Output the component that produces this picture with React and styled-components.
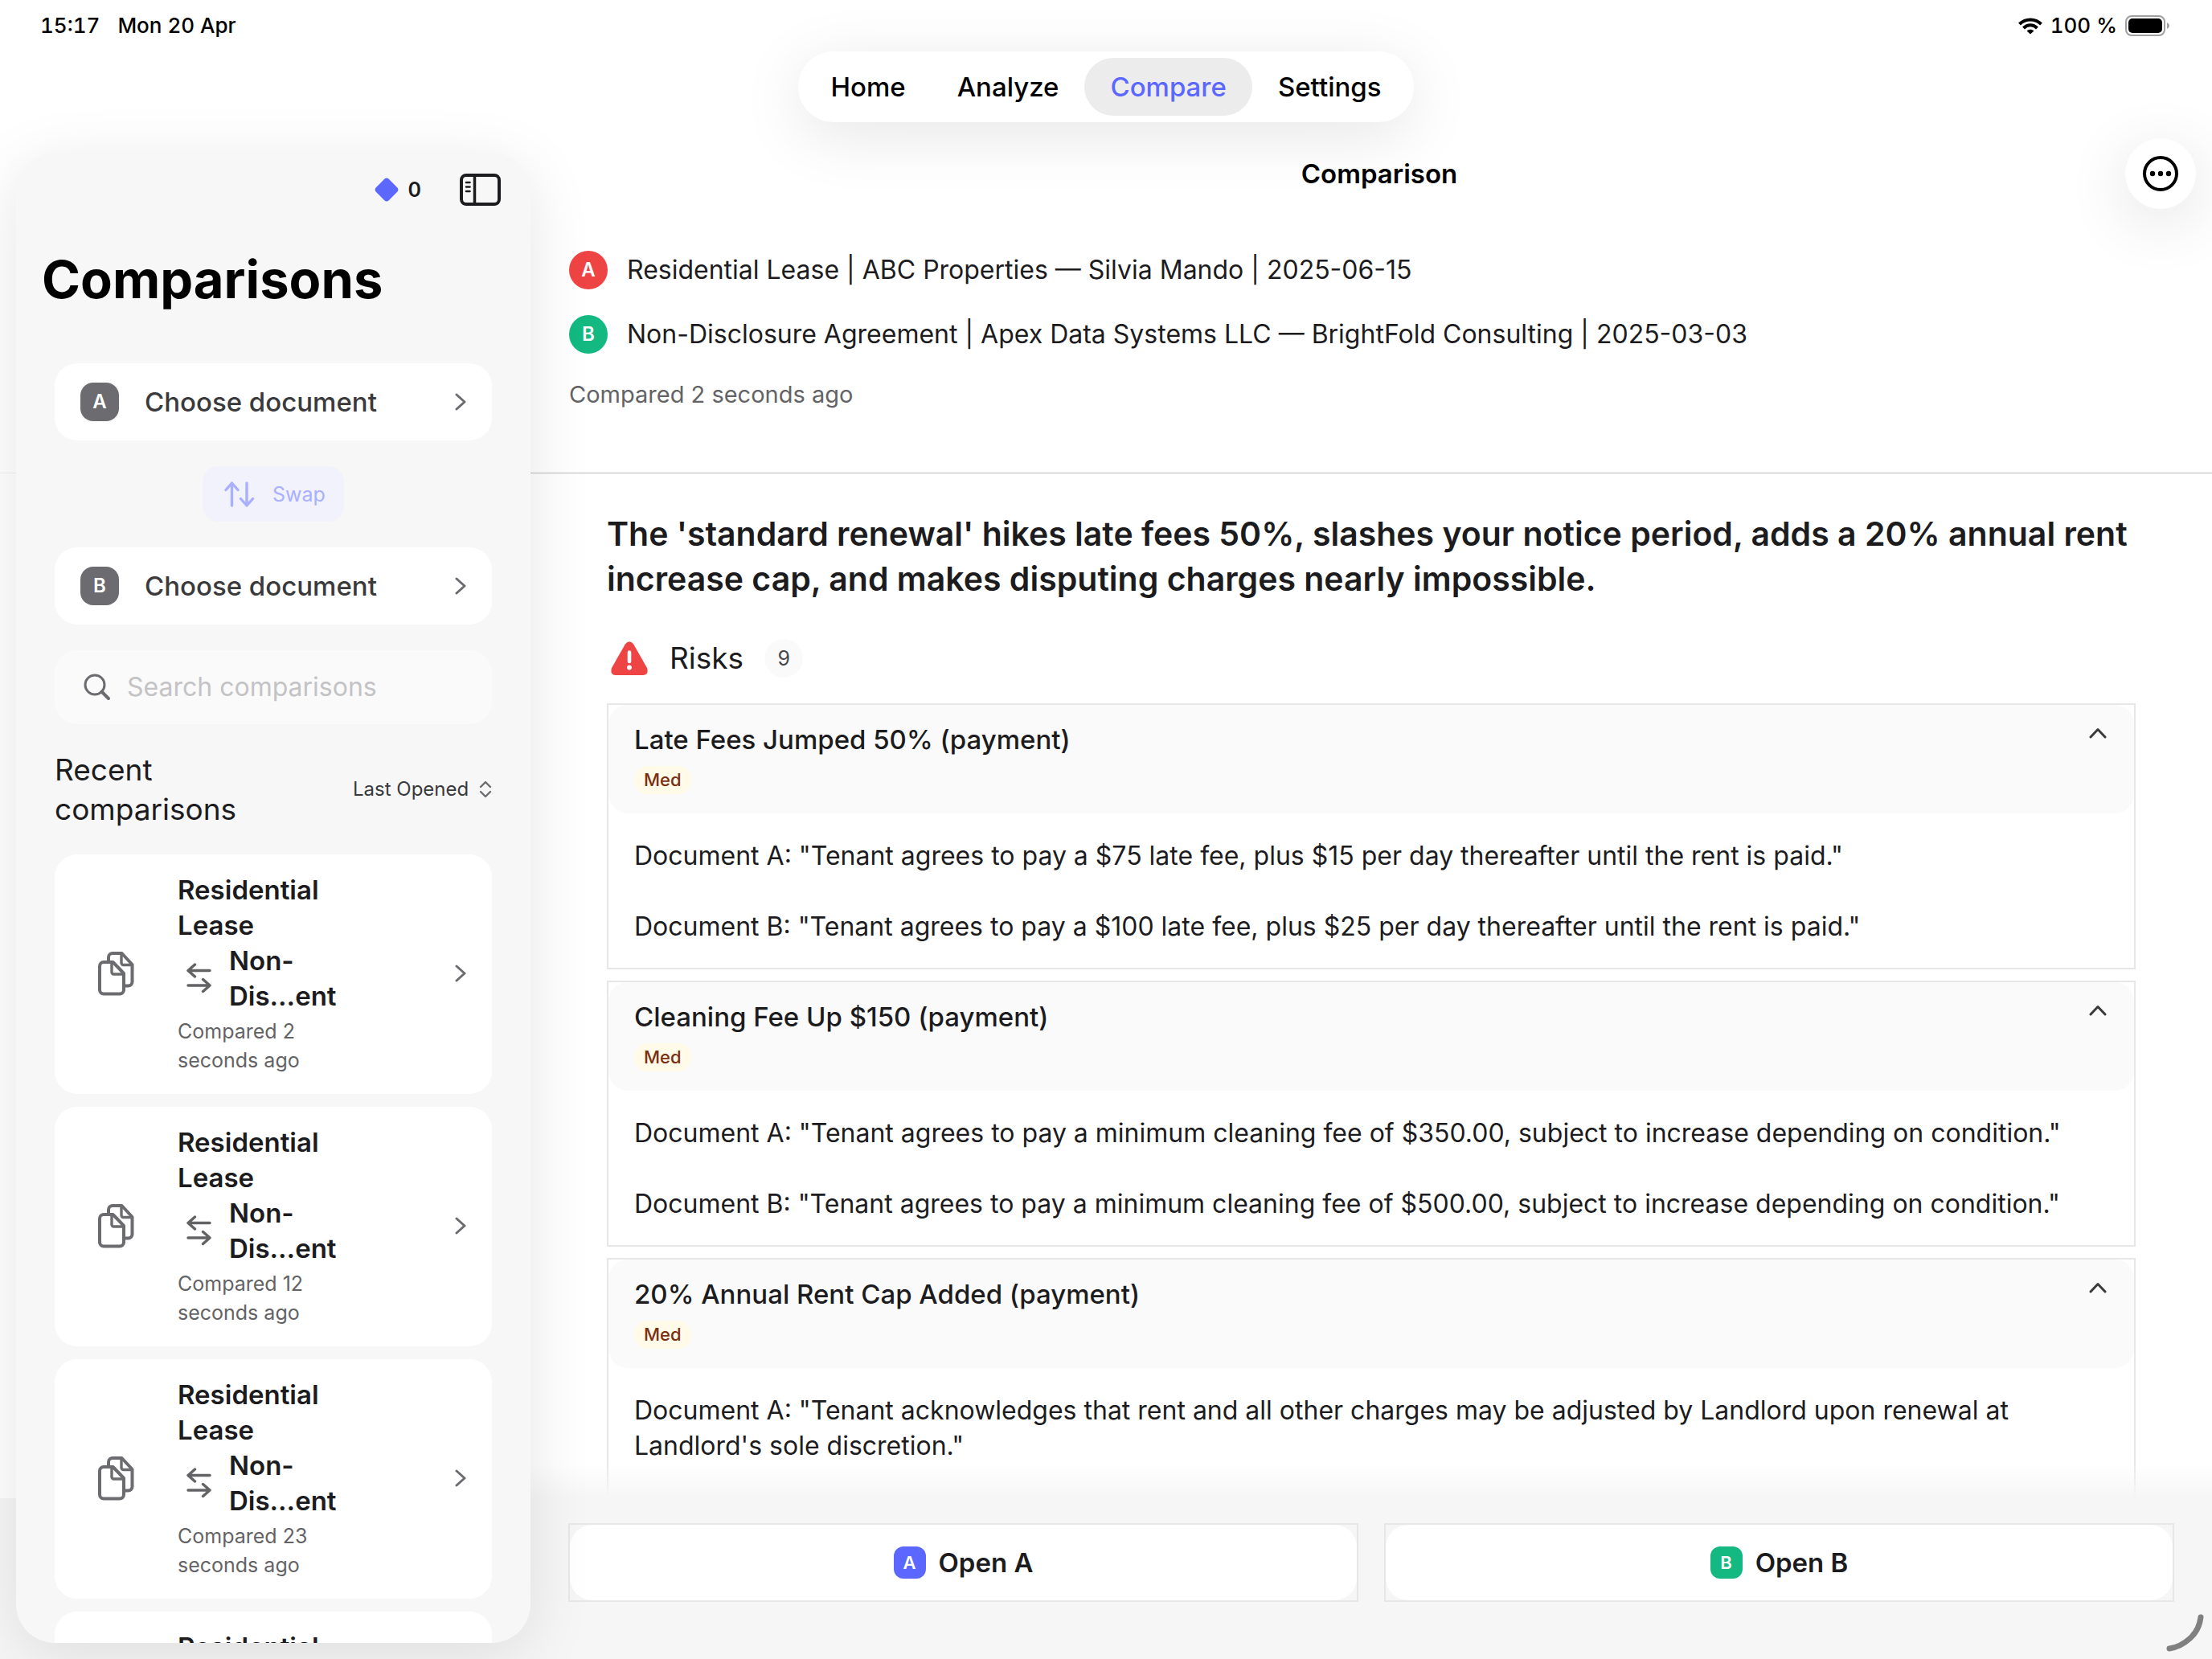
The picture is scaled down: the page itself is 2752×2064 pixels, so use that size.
import React from 'react';
import styled, { createGlobalStyle, css } from 'styled-components';

const color = {
  ink: '#1c1c1f',
  inkSoft: '#3a3a3c',
  muted: '#636366',
  icon: '#6c6c70',
  accent: '#5b67ff',
  red: '#ef4444',
  green: '#13b981',
  panel: '#f7f7f7',
  faint: '#fafafa',
  line: '#e7e7e7',
};

const size = {
  xs: '22px',
  sm: '24px',
  md: '25px',
  status: '26px',
  lg: '29px',
  body: '32px',
  label: '33px',
  title: '37px',
  lead: '41px',
  hero: '65px',
};

const GlobalStyle = createGlobalStyle`
  *, *::before, *::after { box-sizing: border-box; }
  body {
    margin: 0;
    background: #fff;
    color: ${color.ink};
    font-family: Inter, "Liberation Sans", sans-serif;
    font-size: ${size.body};
    line-height: 44px;
  }
  h1, h2, h3, p, ul { margin: 0; padding: 0; font-weight: 400; }
  ul { list-style: none; }
  button, input, select { font: inherit; color: inherit; }
  button { cursor: pointer; border: 0; background: none; padding: 0; text-align: left; }
  a { color: inherit; text-decoration: none; }
  svg { display: block; flex: none; }
`;

const Screen = styled.div`
  display: grid;
  grid-template-columns: 660px minmax(0, 1fr);
  grid-template-rows: 64px 88px minmax(0, 1fr);
  height: 100vh;
  overflow: hidden;
`;

const StatusBar = styled.header`
  grid-column: 1 / -1;
  display: flex;
  justify-content: space-between;
  align-items: center;
  padding: 0 52px 0 50px;
  color: #000;
  font-size: ${size.status};
  font-weight: 500;
  font-variant-numeric: tabular-nums;
  line-height: 32px;
`;

const StatusGroup = styled.div`
  display: flex;
  align-items: center;
  gap: ${(p) => p.$gap}px;
`;

const NavRow = styled.div`
  grid-column: 1 / -1;
  display: flex;
  justify-content: center;
  z-index: 3;
`;

const NavPill = styled.nav`
  display: flex;
  padding: 8px;
  border-radius: 44px;
  background: #fff;
  box-shadow: 0 16px 80px rgba(0, 0, 0, 0.1);
`;

const NavLink = styled.a`
  display: flex;
  align-items: center;
  padding: 0 32px;
  border-radius: 36px;
  color: #000;
  font-size: ${size.label};
  font-weight: 500;
  ${(p) => p.$active && css`
    background: #ececec;
    color: ${color.accent};
  `}
`;

const Sidebar = styled.aside`
  grid-area: 3 / 1;
  z-index: 2;
  display: flex;
  flex-direction: column;
  margin: 38px 0 20px 20px;
  border-radius: 48px;
  background: ${color.panel};
  overflow: hidden;
  box-shadow: 0 16px 80px rgba(0, 0, 0, 0.1);
`;

const SidebarTools = styled.div`
  flex: none;
  display: flex;
  align-items: center;
  justify-content: flex-end;
  gap: 48px;
  height: 92px;
  padding-right: 37px;
`;

const Credits = styled.div`
  display: flex;
  align-items: center;
  gap: 12px;
  font-size: ${size.md};
  font-weight: 600;
`;

const SidebarTitle = styled.h1`
  flex: none;
  padding: 26px 32px 0;
  color: #000;
  font-size: ${size.hero};
  font-weight: 700;
  line-height: 80px;
`;

const SidebarBody = styled.div`
  display: flex;
  flex-direction: column;
  gap: 32px;
  padding: 64px 48px 0;
`;

const Chooser = styled.button`
  display: flex;
  align-items: center;
  height: 96px;
  padding: 0 32px;
  gap: 32px;
  border-radius: 28px;
  background: #fff;
  color: ${color.inkSoft};
  font-size: ${size.label};
  font-weight: 500;
`;

const Grow = styled.span`
  flex: 1;
`;

const Letter = styled.span`
  display: flex;
  align-items: center;
  justify-content: center;
  flex: none;
  width: ${(p) => p.$size}px;
  height: ${(p) => p.$size}px;
  border-radius: ${(p) => p.$radius}px;
  background: ${(p) => p.$bg};
  color: #fff;
  font-size: ${(p) => (p.$size > 40 ? size.sm : size.xs)};
  font-weight: 600;
`;

const SwapButton = styled.button`
  display: flex;
  align-items: center;
  align-self: center;
  gap: 22px;
  height: 69px;
  padding: 0 23px 0 27px;
  border-radius: 20px;
  background: #f1f2fb;
  color: #a9b0ff;
  font-size: ${size.md};
`;

const SearchField = styled.label`
  display: flex;
  align-items: center;
  gap: 20px;
  height: 92px;
  padding: 0 36px;
  border-radius: 28px;
  background: ${color.faint};
  color: ${color.icon};
`;

const SearchInput = styled.input`
  flex: 1;
  min-width: 0;
  padding: 0;
  border: 0;
  outline: 0;
  background: none;
  &::placeholder { color: #c3c3c5; opacity: 1; }
`;

const RecentHeader = styled.div`
  display: flex;
  align-items: center;
  justify-content: space-between;
`;

const RecentTitle = styled.h2`
  max-width: 280px;
  font-size: ${size.title};
  line-height: 49px;
`;

const SortField = styled.label`
  display: flex;
  align-items: center;
  gap: 12px;
  color: ${color.inkSoft};
  font-size: ${size.sm};
  line-height: 32px;
`;

const SortSelect = styled.select`
  appearance: none;
  padding: 0;
  border: 0;
  background: none;
`;

const RecentList = styled.ul`
  display: flex;
  flex-direction: column;
  gap: 16px;
`;

const RecentCard = styled.button`
  display: flex;
  align-items: center;
  width: 100%;
  padding: 22px 32px 24px 54px;
  border-radius: 28px;
  background: #fff;
  color: ${color.icon};
`;

const RecentText = styled.span`
  display: block;
  width: 216px;
  margin: 0 auto 0 54px;
  color: ${color.ink};
  font-size: ${size.label};
  font-weight: 600;
`;

const RecentPair = styled.span`
  display: flex;
  align-items: center;
  gap: 22px;
  padding-left: 11px;
  color: ${color.muted};
`;

const PairName = styled.span`
  color: ${color.ink};
`;

const RecentTime = styled.span`
  display: block;
  padding-top: 4px;
  color: ${color.muted};
  font-size: ${size.md};
  font-weight: 400;
  line-height: 36px;
`;

/* Runs under the floating sidebar so that rules and bars reach both window edges. */
const Detail = styled.main`
  grid-area: 3 / 1 / 4 / 3;
  display: flex;
  flex-direction: column;
  min-height: 0;
`;

const TitleRow = styled.div`
  display: grid;
  grid-template-columns: 1fr auto 1fr;
  align-items: center;
  padding: 20px 20px 0 700px;
`;

const DetailTitle = styled.h2`
  grid-column: 2;
  color: #000;
  font-size: ${size.label};
  font-weight: 600;
`;

const MoreButton = styled.button`
  display: grid;
  place-items: center;
  justify-self: end;
  width: 88px;
  height: 88px;
  border-radius: 50%;
  background: #fff;
  color: #000;
  box-shadow: 0 16px 80px rgba(0, 0, 0, 0.12);
`;

const Documents = styled.section`
  display: flex;
  flex-direction: column;
  gap: 32px;
  padding: 52px 48px 78px 708px;
  border-bottom: 1px solid;
  border-image: linear-gradient(to right, #f0f0f0 340px, #b9b9b9 340px) 1;
`;

const DocumentLine = styled.p`
  display: flex;
  align-items: center;
  gap: 24px;
  height: 48px;
`;

const ComparedAt = styled.p`
  color: ${color.muted};
  font-size: ${size.lg};
  line-height: 38px;
`;

const Report = styled.section`
  flex: 1;
  min-height: 0;
  overflow: hidden;
  padding: 47px 95px 0 755px;
`;

const Summary = styled.h3`
  font-size: ${size.lead};
  font-weight: 600;
  line-height: 56px;
`;

const RiskHeading = styled.div`
  display: flex;
  align-items: center;
  gap: 26px;
  height: 48px;
  margin: 47px 0 32px;
  padding-left: 4px;
`;

const RiskTitle = styled.h3`
  font-size: ${size.title};
  line-height: 48px;
`;

const Count = styled.span`
  display: grid;
  place-items: center;
  width: 48px;
  height: 48px;
  border-radius: 50%;
  background: ${color.faint};
  color: #48484a;
  font-size: ${size.md};
`;

const RiskList = styled.div`
  display: flex;
  flex-direction: column;
  gap: 14px;
`;

const RiskCard = styled.article`
  border: 2px solid ${color.line};
  &:last-child { padding-bottom: 88px; }
`;

const RiskToggle = styled.button`
  display: flex;
  justify-content: space-between;
  width: 100%;
  padding: 21px 34px 24px 32px;
  border-radius: 24px;
  background: ${color.faint};
  font-size: ${size.label};
  font-weight: 500;
`;

const RiskLabel = styled.span`
  display: flex;
  flex-direction: column;
  align-items: flex-start;
  gap: 11px;
`;

const Severity = styled.span`
  padding: 0 12px;
  border-radius: 16px;
  background: #fffbe8;
  color: #7a2e12;
  font-size: ${size.xs};
  line-height: 35px;
`;

const ChevronSlot = styled.span`
  padding-top: 7px;
  color: ${color.inkSoft};
`;

const RiskBody = styled.div`
  display: flex;
  flex-direction: column;
  gap: 44px;
  padding: 31px 32px 29px;
`;

const BottomBar = styled.footer`
  position: relative;
  display: grid;
  grid-template-columns: 1fr 1fr;
  gap: 32px;
  padding: 31px 47px 71px 707px;
  background: #f6f6f6;
  &::before {
    content: '';
    position: absolute;
    inset: -44px 0 auto 660px;
    height: 44px;
    background: linear-gradient(rgba(246, 246, 246, 0), #f6f6f6);
  }
`;

const OpenFrame = styled.div`
  border: 2px solid ${color.line};
`;

const OpenButton = styled.button`
  display: flex;
  align-items: center;
  justify-content: center;
  gap: 16px;
  width: 100%;
  height: 94px;
  border-radius: 28px;
  background: #fff;
  font-size: ${size.label};
  font-weight: 600;
`;

const CornerMark = styled.svg`
  position: absolute;
  right: 8px;
  bottom: 8px;
`;

const line = { fill: 'none', stroke: 'currentColor', strokeLinecap: 'round', strokeLinejoin: 'round' };

const WifiIcon = () => (
  <svg width="30" height="21" viewBox="0 0 30 21" fill="none" stroke="currentColor" strokeWidth="4">
    <path d="M1.500 8 C9 0.500 21 0.500 28.500 8" />
    <path d="M6.500 13 C11.500 8 18.500 8 23.500 13" />
    <path d="M10.500 16.500 C13 14 17 14 19.500 16.500 L15 20.500Z" fill="currentColor" stroke="none" />
  </svg>
);

const BatteryIcon = () => (
  <svg width="56" height="26" viewBox="0 0 56 26">
    <rect x="1" y="1" width="48" height="24" rx="7" fill="none" stroke="#a0a0a0" strokeWidth="2" />
    <rect x="4" y="4" width="42" height="18" rx="5" />
    <path d="M52 9 q3 1.500 3 4 q0 2.500 -3 4z" fill="#a0a0a0" />
  </svg>
);

const DiamondIcon = () => (
  <svg width="30" height="30" viewBox="0 0 30 30" fill={color.accent}>
    <path d="M12.500 1.600 Q15 -0.400 17.500 1.600 L28.400 12.500 Q30.400 15 28.400 17.500 L17.500 28.400 Q15 30.400 12.500 28.400 L1.600 17.500 Q-0.400 15 1.600 12.500Z" />
  </svg>
);

const SidebarIcon = () => (
  <svg width="51" height="40" viewBox="0 0 51 40" {...line} strokeWidth="4">
    <rect x="2" y="2" width="47" height="36" rx="6" />
    <path d="M18.500 2V38" strokeWidth="3.500" />
    <path d="M8 11H12.500M8 16.500H12.500M8 22H12.500" strokeWidth="2.600" />
  </svg>
);

const ChevronRight = () => (
  <svg width="14" height="22" viewBox="0 0 14 22" {...line} stroke={color.icon} strokeWidth="3">
    <path d="M2 2L12 11L2 20" />
  </svg>
);

const ChevronUp = () => (
  <svg width="22" height="14" viewBox="0 0 22 14" {...line} strokeWidth="3">
    <path d="M2 12L11 2.500L20 12" />
  </svg>
);

const SwapIcon = () => (
  <svg width="38" height="32" viewBox="0 0 38 32" {...line} strokeWidth="3.400">
    <path d="M9.500 30V2M2 10.500L9.500 2L17 10.500M28 2V30M20.500 21.500L28 30L35.500 21.500" />
  </svg>
);

const SearchIcon = () => (
  <svg width="34" height="34" viewBox="0 0 34 34" {...line} strokeWidth="3">
    <circle cx="14" cy="14" r="12" />
    <path d="M22.500 22.500L31 31" strokeWidth="4" />
  </svg>
);

const SortIcon = () => (
  <svg width="16" height="22" viewBox="0 0 16 22" {...line} stroke={color.icon} strokeWidth="2.400">
    <path d="M2 8L8 2L14 8M2 14L8 20L14 14" />
  </svg>
);

const DocumentsIcon = () => (
  <svg width="45" height="55" viewBox="0 0 45 55" {...line} strokeWidth="4">
    <path d="M13 11V7a5 5 0 0 1 5-5H29.500L42.500 16V37.500a5 5 0 0 1-5 5H34" />
    <path d="M29 2V14a2.500 2.500 0 0 0 2.500 2.500H42.500" strokeWidth="3.400" />
    <path d="M18.500 13H7a5 5 0 0 0-5 5V47.500a5 5 0 0 0 5 5H27a5 5 0 0 0 5-5V27Z" />
    <path d="M17 13V25.500a2.500 2.500 0 0 0 2.500 2.500H32" strokeWidth="3.400" />
  </svg>
);

const ExchangeIcon = () => (
  <svg width="31" height="38" viewBox="0 0 31 38" {...line} strokeWidth="3.400">
    <path d="M29 9.500H2M10.500 2L2 9.500L10.500 17M2 28H29M20.500 20.500L29 28L20.500 35.500" />
  </svg>
);

const MoreIcon = () => (
  <svg width="44" height="44" viewBox="0 0 44 44">
    <circle cx="22" cy="22" r="20" fill="none" stroke="currentColor" strokeWidth="4" />
    <circle cx="12" cy="22" r="3.200" />
    <circle cx="22" cy="22" r="3.200" />
    <circle cx="32" cy="22" r="3.200" />
  </svg>
);

const WarningIcon = () => (
  <svg width="48" height="42" viewBox="0 0 48 42">
    <path d="M18.800 3.600 Q24 -3.200 29.200 3.600 L46 33 Q48.500 41.500 41 42 H7 Q-0.500 41.500 2 33Z" fill={color.red} />
    <path d="M24 13.500V25" stroke="#fff" strokeWidth="4.600" strokeLinecap="round" />
    <circle cx="24" cy="32.500" r="2.900" fill="#fff" />
  </svg>
);

const comparisons = ['Compared 2 seconds ago', 'Compared 12 seconds ago', 'Compared 23 seconds ago', 'Compared 35 seconds ago'];

const risks = [
  {
    title: 'Late Fees Jumped 50% (payment)',
    a: 'Document A: "Tenant agrees to pay a $75 late fee, plus $15 per day thereafter until the rent is paid."',
    b: 'Document B: "Tenant agrees to pay a $100 late fee, plus $25 per day thereafter until the rent is paid."',
  },
  {
    title: 'Cleaning Fee Up $150 (payment)',
    a: 'Document A: "Tenant agrees to pay a minimum cleaning fee of $350.00, subject to increase depending on condition."',
    b: 'Document B: "Tenant agrees to pay a minimum cleaning fee of $500.00, subject to increase depending on condition."',
  },
  {
    title: '20% Annual Rent Cap Added (payment)',
    a: 'Document A: "Tenant acknowledges that rent and all other charges may be adjusted by Landlord upon renewal at Landlord\'s sole discretion."',
  },
];

const DocumentChooser = ({ letter }) => (
  <Chooser type="button">
    <Letter $size={48} $radius={16} $bg={color.icon}>{letter}</Letter>
    <Grow>Choose document</Grow>
    <ChevronRight />
  </Chooser>
);

const Recent = ({ time }) => (
  <li>
    <RecentCard type="button">
      <DocumentsIcon />
      <RecentText>
        Residential Lease
        <RecentPair>
          <ExchangeIcon />
          <PairName>Non-Dis…ent</PairName>
        </RecentPair>
        <RecentTime>{time}</RecentTime>
      </RecentText>
      <ChevronRight />
    </RecentCard>
  </li>
);

const Risk = ({ title, a, b }) => (
  <RiskCard>
    <RiskToggle type="button" aria-expanded="true">
      <RiskLabel>
        {title}
        <Severity>Med</Severity>
      </RiskLabel>
      <ChevronSlot><ChevronUp /></ChevronSlot>
    </RiskToggle>
    <RiskBody>
      <p>{a}</p>
      {b && <p>{b}</p>}
    </RiskBody>
  </RiskCard>
);

export default function App() {
  return (
    <Screen>
      <GlobalStyle />
      <StatusBar>
        <StatusGroup $gap={22}>
          <span>15:17</span>
          <span>Mon 20 Apr</span>
        </StatusGroup>
        <StatusGroup $gap={10}>
          <WifiIcon />
          <span>100 %</span>
          <BatteryIcon />
        </StatusGroup>
      </StatusBar>

      <NavRow>
        <NavPill>
          <NavLink href="#home">Home</NavLink>
          <NavLink href="#analyze">Analyze</NavLink>
          <NavLink href="#compare" $active aria-current="page">Compare</NavLink>
          <NavLink href="#settings">Settings</NavLink>
        </NavPill>
      </NavRow>

      <Sidebar>
        <SidebarTools>
          <Credits><DiamondIcon />0</Credits>
          <button type="button" aria-label="Toggle sidebar"><SidebarIcon /></button>
        </SidebarTools>
        <SidebarTitle>Comparisons</SidebarTitle>
        <SidebarBody>
          <DocumentChooser letter="A" />
          <SwapButton type="button"><SwapIcon />Swap</SwapButton>
          <DocumentChooser letter="B" />
          <SearchField>
            <SearchIcon />
            <SearchInput type="search" placeholder="Search comparisons" aria-label="Search comparisons" />
          </SearchField>
          <RecentHeader>
            <RecentTitle>Recent comparisons</RecentTitle>
            <SortField>
              <SortSelect aria-label="Sort order" defaultValue="opened">
                <option value="opened">Last Opened</option>
              </SortSelect>
              <SortIcon />
            </SortField>
          </RecentHeader>
          <RecentList>
            {comparisons.map((time) => <Recent key={time} time={time} />)}
          </RecentList>
        </SidebarBody>
      </Sidebar>

      <Detail>
        <TitleRow>
          <DetailTitle>Comparison</DetailTitle>
          <MoreButton type="button" aria-label="More"><MoreIcon /></MoreButton>
        </TitleRow>
        <Documents>
          <DocumentLine>
            <Letter $size={48} $radius={24} $bg={color.red}>A</Letter>
            Residential Lease | ABC Properties — Silvia Mando | 2025-06-15
          </DocumentLine>
          <DocumentLine>
            <Letter $size={48} $radius={24} $bg={color.green}>B</Letter>
            Non-Disclosure Agreement | Apex Data Systems LLC — BrightFold Consulting | 2025-03-03
          </DocumentLine>
          <ComparedAt>Compared 2 seconds ago</ComparedAt>
        </Documents>
        <Report>
          <Summary>
            The 'standard renewal' hikes late fees 50%, slashes your notice period, adds a 20% annual rent
            increase cap, and makes disputing charges nearly impossible.
          </Summary>
          <RiskHeading>
            <WarningIcon />
            <RiskTitle>Risks</RiskTitle>
            <Count>9</Count>
          </RiskHeading>
          <RiskList>
            {risks.map((risk) => <Risk key={risk.title} {...risk} />)}
          </RiskList>
        </Report>
        <BottomBar>
          <OpenFrame>
            <OpenButton type="button">
              <Letter $size={40} $radius={12} $bg={color.accent}>A</Letter>Open A
            </OpenButton>
          </OpenFrame>
          <OpenFrame>
            <OpenButton type="button">
              <Letter $size={40} $radius={12} $bg={color.green}>B</Letter>Open B
            </OpenButton>
          </OpenFrame>
          <CornerMark width="50" height="50" viewBox="0 0 50 50" {...line} stroke="#808080" strokeWidth="7">
            <path d="M44 6Q42 22 31 32Q19 43 5 45" />
          </CornerMark>
        </BottomBar>
      </Detail>
    </Screen>
  );
}
